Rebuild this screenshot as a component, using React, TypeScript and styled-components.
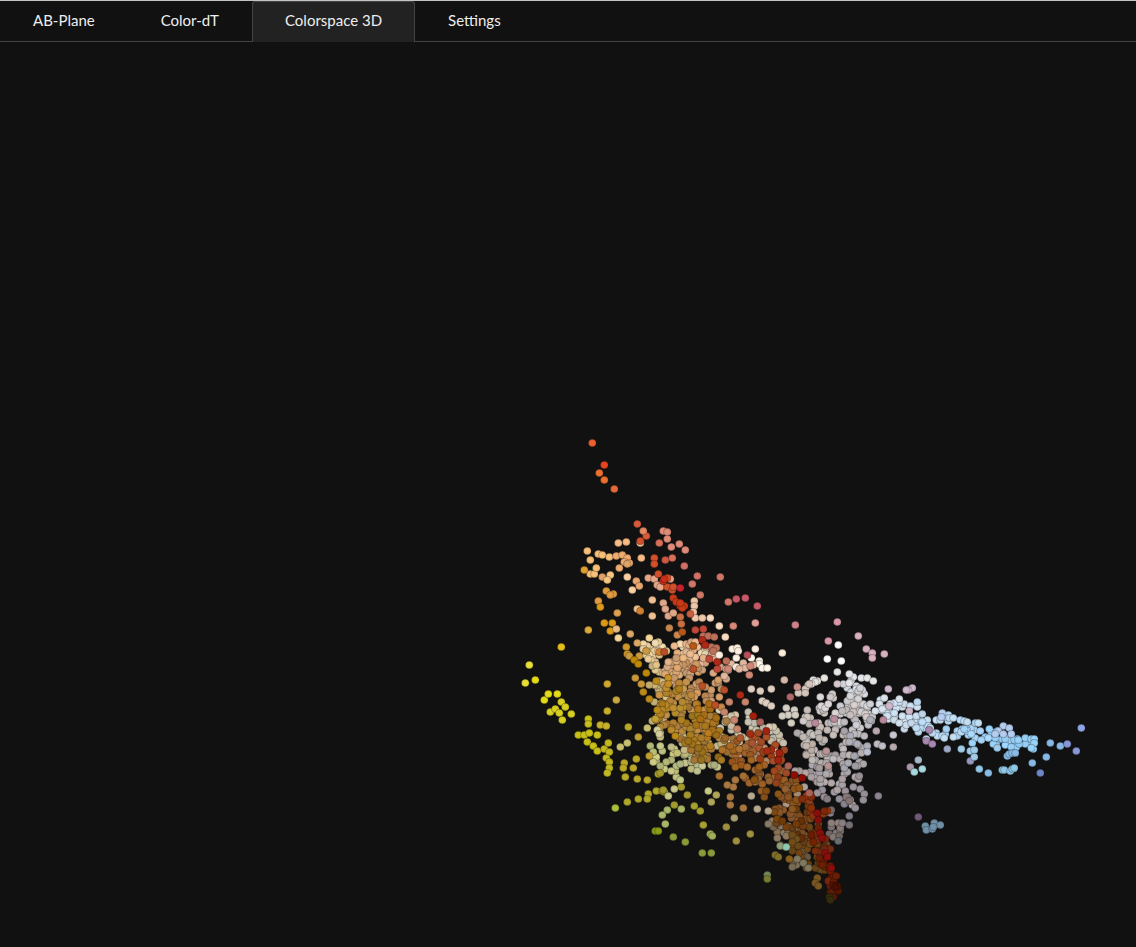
import React, { useState } from "react";
import styled, { createGlobalStyle } from "styled-components";

const GlobalStyle = createGlobalStyle`
  * { box-sizing: border-box; }
  body { margin: 0; background: #111111; }
`;

const Page = styled.div`
  display: flex;
  flex-direction: column;
  min-height: 100vh;
  background: #111111;
  color: #eeeeee;
  font-family: Lato, "Open Sans", sans-serif;
`;

const TabBar = styled.div`
  display: flex;
  height: 42px;
  border-top: 1px solid #c4c4c4;
  border-bottom: 1px solid #444444;
`;

const Tab = styled.button<{ $active: boolean }>`
  height: 41px;
  padding: 0 32px 4px;
  border: 1px solid ${(p) => (p.$active ? "#444444" : "transparent")};
  border-bottom: 0;
  border-radius: 3px 3px 0 0;
  background: ${(p) => (p.$active ? "#222222" : "transparent")};
  color: inherit;
  font: inherit;
  font-size: 15px;
  line-height: 20px;
  cursor: pointer;
`;

const View = styled.main`
  flex: 1;
`;

const Plot = styled.svg`
  display: block;
  width: 100%;
  height: auto;
`;

type Dot = { x: number; y: number; c: string };

/* Each series is a colour followed by the sample positions that share it. */
const parse = (text: string): Dot[] =>
  text
    .trim()
    .split("\n")
    .flatMap((line) => {
      const [c, ...pts] = line.trim().split(/\s+/);
      return pts.map((p) => {
        const [x, y] = p.split(",").map(Number);
        return { x, y, c: "#" + c };
      });
    });

let seed = 7;
const rnd = () => {
  seed = (seed * 1664525 + 1013904223) % 4294967296;
  return seed / 4294967296;
};

type Stop = [x: number, y: number, rx: number, ry: number, color: string];

const channel = (c: string, i: number) => parseInt(c.slice(i * 2, i * 2 + 2), 16);

/* Scatters samples round a path whose width and colour change along it.
   Every other sample lands beside an earlier one, so that clumps form. */
const cloud = (count: number, stops: Stop[], vary = 14, apart = 3): Dot[] => {
  const out: Dot[] = [];
  for (let tries = 0; out.length < count && tries < count * 12; tries++) {
    const t = rnd() * (stops.length - 1);
    const i = Math.min(Math.floor(t), stops.length - 2);
    const f = t - i;
    const a = stops[i];
    const b = stops[i + 1];
    const mix = (m: number, n: number) => m + (n - m) * f;
    const angle = rnd() * Math.PI * 2;
    const r = Math.pow(rnd(), 0.6) * 1.12;
    let x = mix(a[0], b[0]) + Math.cos(angle) * r * mix(a[2], b[2]);
    let y = mix(a[1], b[1]) + Math.sin(angle) * r * mix(a[3], b[3]);
    const near = out.find((d) => Math.hypot(d.x - x, d.y - y) < 9);
    if (near && rnd() < 0.5) {
      const step = 3 + rnd() * 3;
      x = near.x + Math.cos(angle) * step;
      y = near.y + Math.sin(angle) * step;
    }
    x = Math.round(x);
    y = Math.round(y);
    if (out.some((d) => Math.hypot(d.x - x, d.y - y) < apart)) continue;
    const shade = (rnd() - 0.5) * 2 * vary;
    const tint = (rnd() - 0.5) * vary;
    const rgb = [0, 1, 2].map((k) =>
      Math.round(
        Math.max(0, Math.min(255, mix(channel(a[4], k), channel(b[4], k)) + shade + (k - 1) * tint))
      )
    );
    out.push({ x, y, c: `rgb(${rgb.join(",")})` });
  }
  return out;
};

const dots: Dot[] = [
  ...cloud(38, [[652, 752, 7, 14, "c0c47c"], [668, 764, 16, 16, "bcbf7c"], [690, 758, 18, 14, "c0c088"], [706, 760, 12, 10, "b4b484"]]),
  ...cloud(22, [[672, 745, 14, 12, "c8c48a"], [700, 748, 20, 12, "c4bc8a"], [730, 744, 14, 10, "c4bc98"]]),
  ...cloud(46, [[724, 724, 16, 14, "d8ccac"], [748, 722, 18, 16, "d4ccb8"], [755, 742, 18, 16, "c8c0a8"], [778, 738, 11, 16, "c4beac"]]),
  ...cloud(20, [[652, 649, 10, 9, "f0d8a8"], [655, 656, 10, 7, "e8cc98"]], 12),
  ...cloud(24, [[656, 672, 8, 8, "dcc088"], [660, 692, 12, 14, "d0b878"], [660, 722, 12, 16, "c6b878"]]),
  ...cloud(9, [[683, 648, 5, 6, "f4dcb0"], [700, 655, 22, 8, "f4dcb8"]]),
  ...cloud(34, [[684, 648, 12, 8, "e4b48c"], [698, 656, 20, 12, "dcae88"], [720, 672, 14, 10, "dcaf92"]], 16),
  ...cloud(54, [[672, 662, 12, 10, "d8a878"], [694, 680, 25, 15, "cc9a6a"], [704, 700, 25, 16, "c48e58"]], 18),
  ...cloud(92, [[668, 694, 12, 14, "c09048"], [682, 712, 24, 20, "b8863c"], [704, 732, 26, 20, "ac7c38"], [712, 750, 24, 14, "a4783c"]], 16),
  ...cloud(42, [[664, 690, 9, 14, "bc8a28"], [678, 716, 20, 20, "b08424"], [700, 730, 18, 20, "a87a20"], [708, 754, 12, 14, "9c7424"]], 12),
  ...cloud(14, [[700, 712, 12, 12, "b47a20"], [712, 736, 12, 12, "a87018"]], 14, 5),
  ...cloud(36, [[857, 686, 12, 11, "e0e3e8"], [853, 700, 13, 14, "d6d8dd"], [852, 722, 15, 14, "cacacf"]], 8),
  ...cloud(118, [[858, 700, 12, 13, "d4d4d8"], [836, 718, 34, 16, "cac4c4"], [832, 744, 32, 16, "bcb4b4"], [832, 768, 28, 18, "aea6a8"], [838, 792, 22, 18, "9c9298"]], 10),
  ...cloud(28, [[810, 720, 8, 16, "ccc4be"], [814, 745, 14, 16, "bcb2ac"], [806, 782, 16, 12, "a89c98"]], 10),
  ...cloud(14, [[868, 735, 16, 14, "b8b8c4"], [852, 766, 8, 20, "a4a4ac"]], 10, 5),
  ...cloud(20, [[836, 800, 20, 14, "8c8288"], [838, 822, 13, 11, "807478"], [838, 836, 6, 6, "74706f"]]),
  ...cloud(34, [[796, 785, 14, 10, "aa9688"], [778, 822, 15, 12, "908068"], [794, 830, 14, 14, "7c6850"], [804, 860, 11, 10, "6c6450"]]),
  ...cloud(12, [[748, 750, 14, 12, "b88c70"], [770, 770, 14, 10, "a08060"]]),
  ...cloud(98, [[740, 745, 10, 12, "a8642c"], [752, 760, 18, 16, "a06028"], [775, 788, 18, 16, "925a24"], [794, 812, 20, 17, "845024"], [806, 838, 17, 16, "6f441a"], [818, 864, 10, 12, "604018"]], 12),
  ...cloud(30, [[730, 750, 10, 14, "a86c28"], [756, 770, 18, 16, "985c18"], [782, 800, 18, 14, "885014"], [806, 830, 14, 16, "703c10"], [820, 862, 8, 12, "5c2c0c"]], 10, 5),
  ...cloud(12, [[786, 826, 12, 12, "74521c"], [798, 844, 16, 10, "6c4c1c"], [817, 878, 7, 8, "644418"]], 8),
  ...cloud(20, [[750, 736, 10, 10, "a85024"], [770, 754, 12, 12, "a0441c"], [780, 776, 8, 8, "944018"]], 12, 5),
  ...cloud(28, [[800, 798, 9, 12, "8c300c"], [812, 816, 11, 12, "84300c"], [820, 842, 8, 14, "74280c"], [829, 870, 3, 10, "682008"]], 10),
  ...cloud(16, [[829, 868, 3, 8, "70200a"], [832, 884, 3, 8, "641c06"], [833, 896, 2, 4, "4c1404"]], 8, 2),
  ...cloud(38, [[882, 703, 12, 9, "d8e4ee"], [905, 716, 15, 12, "ccdef0"], [924, 722, 17, 11, "c0daf2"]], 8),
  ...cloud(28, [[922, 722, 14, 9, "bedcf4"], [946, 728, 18, 9, "b6d8f6"], [970, 732, 14, 10, "add6f8"]], 8),
  ...cloud(32, [[970, 733, 12, 7, "a8d6f8"], [1000, 740, 12, 4, "9cd4fa"], [1032, 742, 5, 5, "90ccf8"]], 8),
  ...parse(`
    ee6030 592,443
    e94422 604,465
    ec7030 599,473 604,480
    e86a3a 614,489
    d85a3a 637,524 646,536
    e58a62 643,531
    e08c78 663,531 667,532 667,539 679,544 671,547 685,550
    d9705a 659,543 672,558
    fad0a0 640,543
    d4502a 640,541 654,558 654,564
    f8bc84 618,543 626,542 641,558
    f8c078 587,551 590,560 598,554 602,555 609,557 590,574 594,574 596,568
    f0ac70 616,556 622,555 627,558 624,562 629,563 619,568
    e0a468 627,564 602,577
    ce5844 665,560
    d07068 684,566 697,576
    e0a030 584,570
    f8c880 610,575 607,580
    fcd0a0 627,577 632,590
    e8a870 636,581 639,586
    e8a888 648,578 654,579 657,585 660,587 670,579
    d0502a 658,574 667,578 667,587 672,590 673,587
    c83018 663,581 664,579
    c82030 680,588
    e09a40 606,591 613,594 610,595 598,601
    dd9a18 600,607 604,623 612,623 610,631
    dca050 617,613
    e8bc80 616,629
    dcaa38 588,630
    f5d898 618,638 649,638
    dca864 630,634 637,643
    f0c090 637,609 652,600 652,616
    d08030 640,611 659,652
    d09828 626,647 627,654
    c99a40 629,656 639,656 646,651
    c08808 634,660 638,664 646,673
    e5c018 561,647
    ebe038 529,665 525,683
    e5dc18 535,680 544,700 548,694 557,694
    d8d020 561,702 565,707 550,712 555,709 559,713 562,720 571,714
    d0a830 607,684
    c8aa40 616,700
    c8b028 607,711 600,725 606,726
    c8c018 588,719 588,724 578,735 584,735 589,733 597,735 587,742 593,746 597,751
    c2b920 604,749 608,743 609,752 606,758 609,762 609,768 607,773
    baa828 628,727 624,763 636,759 623,768 633,768 625,777 637,779 647,780
    c89838 635,678 641,684
    bc8a18 643,692 649,699 656,681 657,710 675,736
    c0a030 638,737 655,719 649,756
    c8c070 620,747 627,743 647,728
    d5ce98 657,730 659,734
    b0a828 656,791 658,774 664,792 648,794 647,799 638,799 627,802
    a8c038 615,808
    a39a2e 662,791 663,790 660,773 681,787 687,795 674,805
    a8b868 681,809 667,810 662,815 665,824
    8c9c18 655,831 658,831
    8a9c38 673,837 685,842 702,853 711,853
    c8c888 708,791 671,771 674,789 668,796
    b0a858 716,795 711,802
    a8a030 694,806 700,811 703,825
    a0b058 710,834 712,836
    a09040 726,827 736,841 750,834
    a8a070 734,818
    a87840 743,808 730,805 730,797 733,787 727,785 735,780
    b8a890 757,809 751,796 768,811
    a87030 719,776 743,776
    90a078 780,846
    90c8b0 786,847
    807028 775,855 778,857
    886020 789,859
    728858 767,875
    787c30 767,879
    807860 797,859 803,863 808,868
    785820 817,878 815,883 818,886
    342a0c 829,897 830,900
    e0a888 663,603 665,609 668,616 673,613
    c87040 680,617 681,624
    c88850 669,628 677,635
    b85818 682,632 693,646
    f0c8a8 694,601 694,606 693,612 695,618 702,618
    c86040 690,614
    fcdcc0 710,618 719,626 725,637
    c83a18 673,598 676,602 680,606 684,606 682,608 680,603
    d07868 700,595 692,584 720,577 728,602
    c85868 736,599 745,598 757,606
    d88878 733,626
    e0a098 755,623
    c04838 695,630 703,629 709,659 717,669
    bd715a 703,636 708,636 714,637 711,647 716,648 726,661 713,651
    b02818 702,640 705,645 717,662 740,695
    b85028 693,669 702,686 724,690 715,705 664,652
    fff0e0 732,649 737,648 738,651 755,649 736,658 736,667 719,655
    fff8e8 759,661 759,664 762,668 767,668 751,658
    e0b8a0 743,663 745,668 753,665 728,670 724,676 739,669
    b85058 747,655
    d08878 750,666 749,675 728,669
    e0cfc0 751,689 760,691 771,689 762,701 766,703 771,706
    c8866c 745,702 729,702 724,712 734,720 737,729
    a4200f 753,716 766,731 779,753 778,760
    900c04 794,775 802,778
    860f0a 817,813 818,820 820,833 822,838 825,853 827,857 831,868
    ad6258 760,722 809,793 788,766
    a42c10 771,750 750,734 767,751
    d4cfc3 786,708 794,710 788,715 795,715 791,723 782,716
    d08088 795,625
    d898a8 837,622 828,641
    d8b0c0 858,636 866,649 872,653 872,658 884,654
    ffffff 838,645 827,659 841,661
    fcecd8 782,653
    e4e6e8 837,672 849,674 850,682 849,683 861,678 867,678 873,681
    d8c8cc 837,684
    e8e4e0 824,678 817,681 813,680 815,682 808,685 811,684
    d4c6bc 805,689 809,684 798,693 805,693
    c89088 797,687
    b06868 790,697
    d8b8a8 784,680
    dbe4ed 884,698 899,699 879,704 882,709 875,711 890,704
    d0b8cc 888,689 912,688 908,690 906,690 889,706 909,711
    b88a9c 883,720 834,719 815,723
    b89494 826,751 828,766
    dcd8da 820,697 821,706 825,708 828,704
    c3dff2 953,718 964,721 967,722 978,723 930,728 926,739 944,738 953,737
    b4cdf1 1003,726 1009,728 998,731 995,734 1003,734 1011,734 942,713 941,717
    98d4fa 1031,739 1034,739 1034,743 1031,748 1018,740
    a888b0 926,741 932,744 929,730
    a0a8c8 947,749
    9898c0 970,761
    a0cce8 961,749 970,751 974,750 974,757
    90c8e8 979,769 1002,770 1004,770 1010,771 1012,769 1014,768
    88bce6 1007,756 1009,754 1012,753 1015,753 988,773
    88b8e8 1050,743 1060,746 1046,757 1032,763
    8898d8 1067,744 1076,751
    90a8e8 1081,728
    7088c8 1040,773
    b8a8b0 893,747 876,731
    c8c8d0 893,735
    a8b8c8 918,760
    a898a8 910,767
    a8d8e0 914,772 922,769
    8a8490 878,796
    989098 860,789 864,794 863,800 855,808
    705878 918,817
    7090a8 925,826 934,823 940,825 926,830 932,829 933,827
  `),
];

const tabs = ["AB-Plane", "Color-dT", "Colorspace 3D", "Settings"];

export default function App() {
  const [active, setActive] = useState("Colorspace 3D");
  return (
    <Page>
      <GlobalStyle />
      <TabBar role="tablist">
        {tabs.map((name) => (
          <Tab
            key={name}
            type="button"
            role="tab"
            aria-selected={name === active}
            $active={name === active}
            onClick={() => setActive(name)}
          >
            {name}
          </Tab>
        ))}
      </TabBar>
      <View>
        <Plot viewBox="0 42 1136 905" role="img" aria-label="Colorspace 3D">
          <defs>
            <radialGradient id="shade">
              <stop offset="0.55" stopColor="#000" stopOpacity="0" />
              <stop offset="0.85" stopColor="#000" stopOpacity="0.12" />
              <stop offset="1" stopColor="#000" stopOpacity="0.4" />
            </radialGradient>
          </defs>
          {dots.map((d, i) => (
            <g key={i}>
              <circle cx={d.x + 0.3} cy={d.y} r={3.8} fill={d.c} />
              <circle cx={d.x + 0.3} cy={d.y} r={3.9} fill="url(#shade)" />
            </g>
          ))}
        </Plot>
      </View>
    </Page>
  );
}
